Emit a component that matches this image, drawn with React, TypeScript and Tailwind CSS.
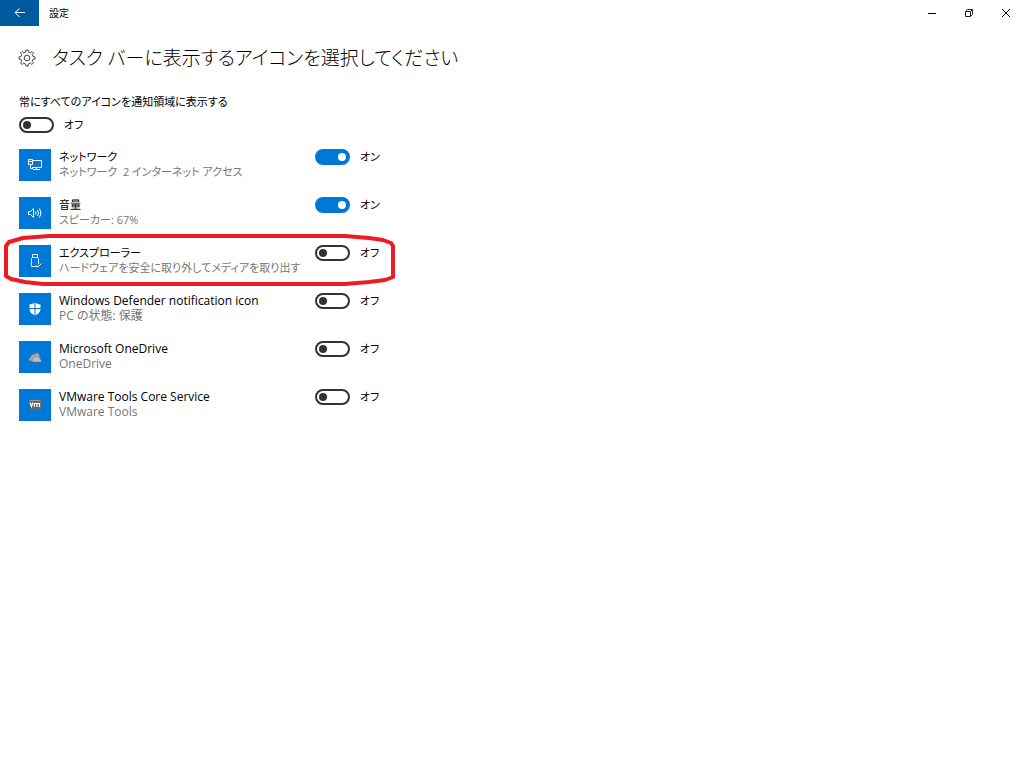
import React, { useId, useState } from 'react';

const NetworkIcon = () => (
  <svg width="16" height="16" viewBox="0 0 16 16" fill="none" stroke="#fff" strokeWidth="1">
    <path d="M5.5 3.5h9v7H5M3.5 7.5v4h2.500" />
    <path d="M1.5 2.5h4v5h-4zM1.5 4.5h4M9.500 10.500v2M6 12.500h7" />
  </svg>
);

const VolumeIcon = () => (
  <svg width="16" height="16" viewBox="0 0 16 16" fill="none" stroke="#fff" strokeWidth="1">
    <path d="M1.5 6.5h2l3-3v9l-3-3h-2z" />
    <path d="M8.5 6.5q1 1.500 0 3M10.500 5q2 3 0 6M12.500 3.500q3 4.500 0 9" />
  </svg>
);

const UsbIcon = () => (
  <svg width="16" height="16" viewBox="0 0 16 16" fill="none" stroke="#fff" strokeOpacity=".9">
    <path d="M5.500 4.500v-3h5v3M10.500 13.500h-6v-8l1-1h5l1 1v6" />
    <path d="M9.500 12.500l1.500 1.500 3.500-3.500" />
  </svg>
);

const DefenderIcon = () => (
  <svg width="16" height="16" viewBox="0 0 16 16">
    <path fill="#fff" d="M8 1.500c1.500 1.200 3.500 1.800 5.500 2V8c0 3-2.300 5.200-5.500 6.500C4.800 13.200 2.500 11 2.500 8V3.500c2-.2 4-.8 5.500-2z" />
    <path stroke="#0078d7" d="M8 1v14M2 7.500h12" />
  </svg>
);

const OneDriveIcon = () => (
  <svg width="16" height="16" viewBox="0 0 16 16" stroke="#777" strokeWidth=".6">
    <path fill="#aaa" d="M3 12c-1.500-.5-1.500-3 .5-3.500C3.500 6 6 5 7.500 5.500 9 3 12.500 4 12.500 7v5z" />
    <path fill="#bdbdbd" d="M6.500 13c-2-.5-2-3.300.2-3.500C7 7 10.500 6.500 11.500 8.700c1.500-.2 2 1 1.800 1.800 1.500.3 1.500 2.300.2 2.500z" />
  </svg>
);

const VmIcon = () => (
  <svg width="16" height="16" viewBox="0 0 16 16" fill="none">
    <rect x="2" y="2" width="12" height="11" rx="1" fill="#666" />
    <path d="M2.500 3.500h11" stroke="#999" />
    <path d="M3 5.500l1.500 4L6 5.500M7.500 10V6.500h5V10M10 6.500V10" stroke="#fff" strokeWidth="1.200" />
  </svg>
);

const GearIcon = () => (
  <svg width="18" height="18" viewBox="0 0 16 16" fill="none" stroke="#333" strokeWidth=".8">
    <path d="M6.8 2.600 7 .9h2l.2 1.700 1.800.8L12.400 2.200 13.800 3.600 12.600 5l.8 1.800 1.700.2v2l-1.700.2-.8 1.800 1.200 1.400-1.400 1.400-1.400-1.200-1.800.8-.2 1.700H7l-.2-1.700-1.800-.8-1.400 1.200-1.400-1.400L3.400 11l-.8-1.800L.9 9V7l1.700-.2L3.400 5 2.200 3.600 3.600 2.200 5 3.400z" />
    <circle cx="8" cy="8" r="2.500" />
  </svg>
);

type Item = {
  title: string;
  detail: string;
  icon: React.ReactNode;
  on: boolean;
  latin?: boolean;
  marked?: boolean;
};

const items: Item[] = [
  { title: 'ネットワーク', detail: 'ネットワーク  2 インターネット アクセス', icon: <NetworkIcon />, on: true },
  { title: '音量', detail: 'スピーカー: 67%', icon: <VolumeIcon />, on: true },
  { title: 'エクスプローラー', detail: 'ハードウェアを安全に取り外してメディアを取り出す', icon: <UsbIcon />, on: false, marked: true },
  { title: 'Windows Defender notification icon', detail: 'PC の状態: 保護', icon: <DefenderIcon />, on: false, latin: true },
  { title: 'Microsoft OneDrive', detail: 'OneDrive', icon: <OneDriveIcon />, on: false, latin: true },
  { title: 'VMware Tools Core Service', detail: 'VMware Tools', icon: <VmIcon />, on: false, latin: true },
];

const Toggle: React.FC<{ initial: boolean; labelledBy: string }> = ({ initial, labelledBy }) => {
  const [on, setOn] = useState(initial);

  return (
    <label className="flex h-4 items-center gap-2.5">
      <input
        type="checkbox"
        role="switch"
        checked={on}
        onChange={e => setOn(e.target.checked)}
        aria-labelledby={labelledBy}
        className="flex h-4 w-[35px] shrink-0 appearance-none items-center rounded-full border-2 border-[#333] px-0.5 before:block before:size-2 before:rounded-full before:bg-[#333] checked:justify-end checked:border-[#0078d7] checked:bg-[#0078d7] checked:before:bg-white"
      />
      <span className="text-[11px] leading-4">{on ? 'オン' : 'オフ'}</span>
    </label>
  );
};

const ItemRow: React.FC<{ item: Item }> = ({ item }) => {
  const id = useId();

  return (
    <li className="relative flex items-start">
      <span className="flex size-8 shrink-0 items-center justify-center bg-[#0078d7]">{item.icon}</span>
      <div className={`ml-2 w-64 ${item.latin ? 'text-[12px]' : 'text-[11px]'}`}>
        <p id={id} className="leading-4">{item.title}</p>
        <p className="whitespace-pre leading-[14px] text-[#767676]">{item.detail}</p>
      </div>
      <Toggle initial={item.on} labelledBy={id} />
      {item.marked && (
        <svg
          className="pointer-events-none absolute -left-4 -top-3"
          width="394"
          height="56"
          viewBox="0 0 394 56"
          fill="none"
          stroke="#ed1c24"
          strokeWidth="4"
          strokeLinejoin="round"
        >
          <path d="M46 3H342L366 5 380 7 388 10 390 13V44L382 47 366 49 342 51H40L22 49 8 46 3 43V13L6 9 20 5z" />
        </svg>
      )}
    </li>
  );
};

export default function App() {
  return (
    <div className="min-h-screen bg-white font-['Open_Sans','Noto_Sans_CJK_JP',sans-serif] text-[11px] text-black [font-feature-settings:'palt']">
      <header className="flex h-[26px] items-stretch">
        <button aria-label="戻る" className="flex w-[39px] items-center justify-center bg-[#005a9e]">
          <svg width="12" height="12" viewBox="0 0 12 12" fill="none" stroke="#fff">
            <path d="M11 5.500H1.500M5.500 1.500 1 5.500l4.500 4.500" />
          </svg>
        </button>
        <span className="ml-2.5 flex-1 self-center text-[10px]">設定</span>
        <button aria-label="最小化" className="flex w-[37px] items-center justify-center">
          <svg width="10" height="10" viewBox="0 0 10 10" stroke="#000">
            <path d="M1 5.500h8" />
          </svg>
        </button>
        <button aria-label="元に戻す" className="flex w-[37px] items-center justify-center">
          <svg width="10" height="10" viewBox="0 0 10 10" fill="none" stroke="#222">
            <path d="M1.500 3.500h5v5h-5zM1.500 3.500l2-2h5v5l-2 2M6.500 3.500l2-2" />
          </svg>
        </button>
        <button aria-label="閉じる" className="flex w-[37px] items-center justify-center">
          <svg width="10" height="10" viewBox="0 0 10 10" stroke="#000">
            <path d="M1 1l8 8M9 1 1 9" />
          </svg>
        </button>
      </header>

      <main className="px-[18px] pt-4">
        <div className="flex h-8 items-center gap-4">
          <GearIcon />
          <h1 className="text-[19px] font-light">タスク バーに表示するアイコンを選択してください</h1>
        </div>

        <div className="px-px">
          <section className="mt-5">
            <p id="show-all" className="leading-4">常にすべてのアイコンを通知領域に表示する</p>
            <div className="mt-[7px]">
              <Toggle initial={false} labelledBy="show-all" />
            </div>
          </section>

          <ul className="mt-4 space-y-4">
            {items.map(item => (
              <ItemRow key={item.title} item={item} />
            ))}
          </ul>
        </div>
      </main>
    </div>
  );
}
